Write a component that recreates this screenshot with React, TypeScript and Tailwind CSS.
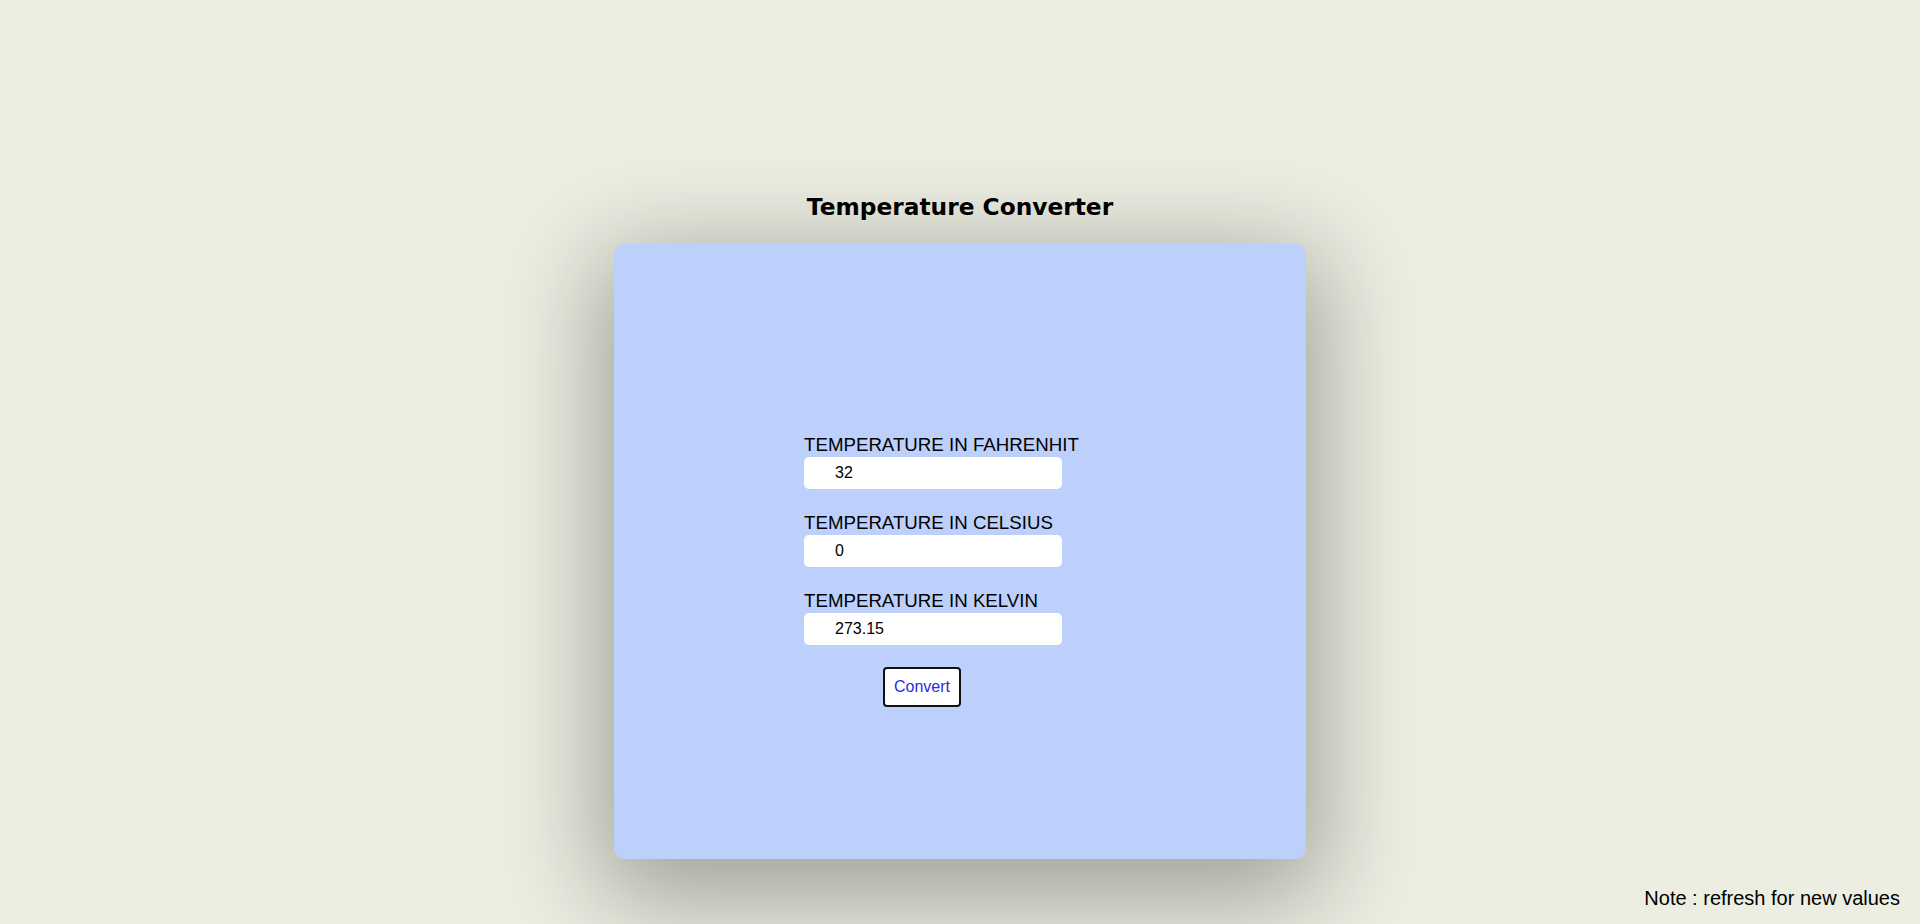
import { useState } from 'react';

// Conversor simple, valores fijos al cargar
function Field({ label, value }: { label: string; value: string }) {
  return (
    <div className="flex flex-col">
      <label className="text-[18.7px] leading-[21px] text-black">{label}</label>
      <input
        readOnly
        value={value}
        className="mt-[2px] h-[32px] w-[258px] rounded-[5px] bg-white pl-[31px] text-[16px] text-black outline-none"
      />
    </div>
  );
}

export default function App() {
  const [vals] = useState({ f: '32', c: '0', k: '273.15' });

  return (
    <div
      className="flex min-h-screen flex-col bg-[#eceee2]"
      style={{ fontFamily: '"Liberation Sans", Arial, sans-serif' }}
    >
      <h2
        className="pt-[193px] text-center text-[23.3px] font-bold leading-[27px] text-black"
        style={{ fontFamily: '"DejaVu Sans", Verdana, sans-serif' }}
      >
        Temperature Converter
      </h2>

      <div className="mx-auto mt-[24px] h-[615px] w-[692px] rounded-[10px] bg-[#bdd0fb] pl-[190px] pt-[190px] shadow-[0_25px_100px_15px_rgba(0,0,0,0.33)]">
        <div className="flex flex-col gap-[23px]">
          <Field label="TEMPERATURE IN FAHRENHIT" value={vals.f} />
          <Field label="TEMPERATURE IN CELSIUS" value={vals.c} />
          <Field label="TEMPERATURE IN KELVIN" value={vals.k} />
        </div>
        <button className="ml-[79px] mt-[22px] h-[40px] w-[78px] rounded-[4px] border-2 border-[#111] bg-white text-[16px] text-[#2b2be0]">
          Convert
        </button>
      </div>

      <p className="mt-[28px] self-end pr-[20px] text-[20px] leading-[23px] text-black">
        Note : refresh for new values
      </p>
    </div>
  );
}
